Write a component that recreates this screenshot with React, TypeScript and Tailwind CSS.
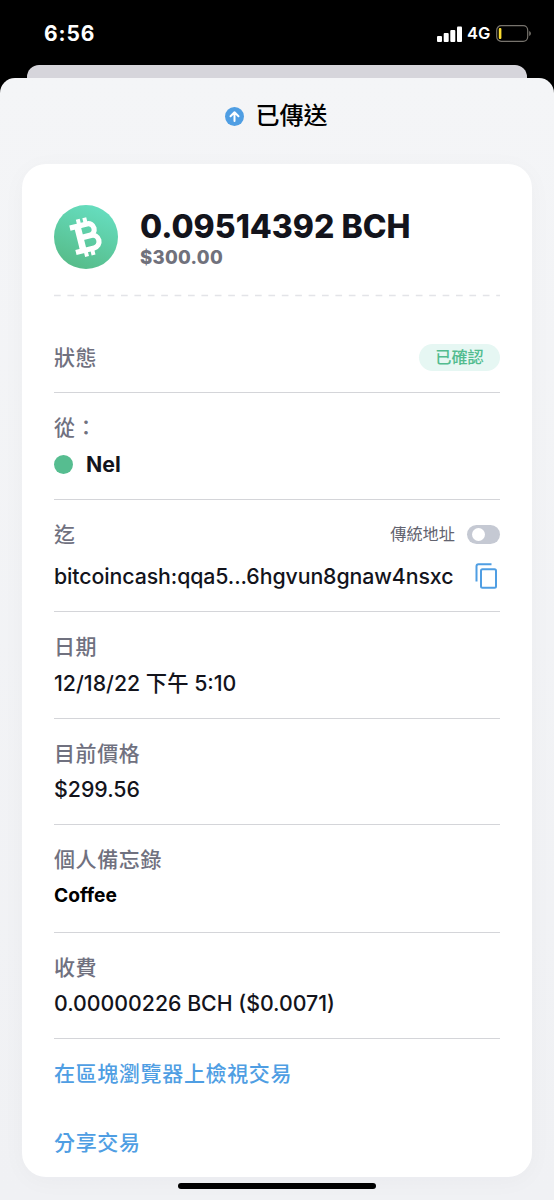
import type { ReactNode } from "react";
import clsx from "clsx";

const details = [
  { label: "日期", value: "12/18/22 下午 5:10", height: "h-[107px]", text: "mt-[7px] text-[21.3px] font-medium" },
  { label: "目前價格", value: "$299.56", height: "h-[106px]", text: "mt-[6px] text-[21.3px] font-medium" },
  { label: "個人備忘錄", value: "Coffee", height: "h-[108px]", text: "mt-[6px] text-[19.2px] font-bold text-black" },
  { label: "收費", value: "0.00000226 BCH ($0.0071)", height: "h-[106px]", text: "mt-[6px] text-[21.3px] font-medium" },
];

function StatusBar() {
  return (
    <div className="flex h-[65px] items-center justify-between pl-11 pr-[22px] pt-[2px] text-white">
      <span className="text-[21px] font-bold leading-none tracking-[0.9px]">6:56</span>
      <div className="flex items-center">
        <svg width="25" height="16" viewBox="0 0 25 16" fill="currentColor">
          <rect x="0" y="10" width="5" height="6" rx="1" />
          <rect x="6.7" y="7" width="5" height="9" rx="1" />
          <rect x="13.3" y="4" width="5" height="12" rx="1" />
          <rect x="20" y="0.5" width="5" height="15.5" rx="1" />
        </svg>
        <span className="ml-[5px] w-[23px] whitespace-nowrap text-[16.5px] font-semibold leading-none">4G</span>
        <svg className="ml-[6px]" width="36" height="17" viewBox="0 0 36 17" fill="none">
          <rect x="0.7" y="0.7" width="31" height="15.6" rx="4.5" stroke="#77736d" strokeWidth="1.2" />
          <rect x="2.8" y="3" width="2.6" height="11" rx="1" fill="#fbdc30" />
          <path d="M33.2 6v5c1-.5 1.7-1.3 1.7-2.5S34.2 6.500 33.2 6z" fill="#77736d" />
        </svg>
      </div>
    </div>
  );
}

function BchLogo() {
  return (
    <svg width="64" height="64" viewBox="0 0 64 64" fill="none">
      <defs>
        <linearGradient id="bch" x1="0.7" y1="0" x2="0.3" y2="1">
          <stop offset="0" stopColor="#66dec0" />
          <stop offset="1" stopColor="#56bb88" />
        </linearGradient>
      </defs>
      <circle cx="32" cy="32" r="32" fill="url(#bch)" />
      <g stroke="#fff" transform="rotate(-14 32 32)">
        <path d="M18.500 19.500H36a5.900 5.900 0 0 1 0 11.800H26M26 31.800H37.300a6.400 6.400 0 0 1 0 12.800H18.500" strokeWidth="5.2" />
        <path d="M26.200 19.500V44.600" strokeWidth="6.6" />
        <path d="M28.300 12.800V19M35 12.800V19M28.300 45V51.200M35 45V51.200" strokeWidth="4" />
      </g>
    </svg>
  );
}

function Row({ label, height, right, children }: { label: string; height: string; right?: ReactNode; children?: ReactNode }) {
  return (
    <div className={clsx("border-b border-[#d4d5d9] pt-5", height)}>
      <div className="flex h-[29px] items-center justify-between">
        <span className="text-[21px] font-medium leading-[29px] tracking-[0.6px] text-[#70717f]">{label}</span>
        {right}
      </div>
      {children}
    </div>
  );
}

export default function App() {
  return (
    <div className="flex h-[1200px] w-[554px] flex-col overflow-hidden bg-black font-['Inter','Noto_Sans_CJK_TC',sans-serif] text-[#13141c]">
      <StatusBar />
      <div className="mx-[27px] h-[13px] shrink-0 rounded-t-[12px] bg-[#d6d5db]" />

      <div className="flex flex-1 flex-col rounded-t-[15px] bg-linear-to-b from-[#f4f5f7] to-[#f0f1f4] px-[22px]">
        <div className="flex h-[86px] items-center justify-center pb-[10px] pr-[2px]">
          <svg width="19" height="19" viewBox="0 0 19 19" fill="none">
            <circle cx="9.5" cy="9.5" r="9.5" fill="#4f9ee3" />
            <path d="M9.5 14V5.500M5.500 9.300l4-4 4 4" stroke="#fff" strokeWidth="2" strokeLinecap="round" strokeLinejoin="round" />
          </svg>
          <h1 className="ml-3 text-[24px] font-medium leading-9 text-black">已傳送</h1>
        </div>

        <div className="h-[1013px] rounded-[24px] bg-white px-8 shadow-[0_4px_24px_rgba(30,30,60,0.03)]">
          <div className="flex h-[130px] pt-[41px]">
            <BchLogo />
            <div className="ml-[22px]">
              <div className="whitespace-nowrap pt-px text-[32px] font-extrabold leading-[42px]">0.09514392 BCH</div>
              <div className="text-[18.5px] font-extrabold leading-[18px] tracking-[0.3px] text-[#70717c]">$300.00</div>
            </div>
          </div>
          <svg className="block" width="446" height="3">
            <line x1="0" y1="1.5" x2="446" y2="1.5" stroke="#e3e4e8" strokeWidth="1.5" strokeDasharray="6.7 6.7" />
          </svg>

          <Row
            label="狀態"
            height="h-[96px] pt-[46px]"
            right={
              <span className="flex h-[27px] w-[81px] items-center justify-center rounded-full bg-[#e6f7f3] text-[16.2px] font-medium text-[#52bc8f]">
                已確認
              </span>
            }
          />

          <Row label="從：" height="h-[107px]">
            <div className="mt-[7px] flex h-[30px] items-center">
              <span className="size-[19px] rounded-full bg-[#56bd90]" />
              <span className="ml-[13px] text-[21.3px] font-bold leading-[30px]">Nel</span>
            </div>
          </Row>

          <Row
            label="迄"
            height="h-[112px]"
            right={
              <span className="flex items-center">
                <span className="text-[16.2px] leading-[29px] text-[#62636f]">傳統地址</span>
                <span className="ml-3 flex h-[19px] w-[33px] items-center rounded-full bg-[#c5c9d3] pl-[5px]">
                  <span className="size-[13px] rounded-full bg-white" />
                </span>
              </span>
            }
          >
            <div className="mt-[12px] flex h-[30px] items-center justify-between pr-[3px]">
              <span className="whitespace-nowrap text-[21.3px] font-medium leading-[30px] tracking-[-0.09px]">bitcoincash:qqa5...6hgvun8gnaw4nsxc</span>
              <svg width="22" height="26" viewBox="0 0 22 26" fill="none" stroke="#4f9ee3" strokeWidth="2">
                <path d="M1.500 18.500V3.200c0-1.200.8-2 2-2h13" />
                <rect x="6" y="6.200" width="15" height="18.500" rx="1.5" />
              </svg>
            </div>
          </Row>

          {details.map((item) => (
            <Row key={item.label} label={item.label} height={item.height}>
              <p className={clsx("leading-[30px]", item.text)}>{item.value}</p>
            </Row>
          ))}

          <div className="pt-5 text-[21px] font-medium leading-[30px] tracking-[0.65px] text-[#4f9ee3]">
            <p>在區塊瀏覽器上檢視交易</p>
            <p className="mt-[39px]">分享交易</p>
          </div>
        </div>

        <div className="mx-auto mt-[6px] h-[6px] w-[198px] shrink-0 rounded-full bg-black" />
      </div>
    </div>
  );
}
